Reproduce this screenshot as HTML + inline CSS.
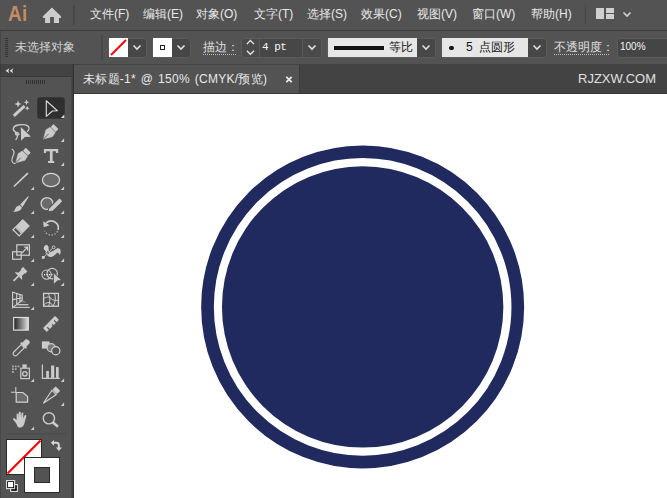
<!DOCTYPE html>
<html><head><meta charset="utf-8">
<style>
*{margin:0;padding:0;box-sizing:border-box}
html,body{width:667px;height:498px;overflow:hidden;background:#535353;font-family:"Liberation Sans",sans-serif;color:#e6e6e6}
.abs{position:absolute}
#menubar{left:0;top:0;width:667px;height:30px;background:#535353}
#menuline{left:0;top:30px;width:667px;height:1px;background:#3c3c3c}
#ctrl{left:0;top:31px;width:667px;height:33px;background:#535353;border-left:1px solid #474747}
#tabbar{left:72px;top:64px;width:595px;height:29px;background:#434343}
#tab{left:74px;top:65px;width:226px;height:28px;background:#535353;border-right:1px solid #3c3c3c}
#canvas{left:74px;top:94px;width:593px;height:404px;background:#fff}
#tabline{left:74px;top:93px;width:593px;height:1px;background:#383838}
#lphdr{left:0;top:64px;width:72px;height:13px;background:#434343;border-bottom:1px solid #3a3a3a;border-left:1px solid #3d3d3d}
#lpanel{left:0;top:77px;width:72px;height:422px;background:#535353;border-left:1px solid #474747;border-right:1px solid #474747}
#gap{left:72px;top:64px;width:2px;height:434px;background:linear-gradient(90deg,#404040 0 1px,#333 1px 2px)}
.menu{top:6px;font-size:12px;color:#e8e8e8;white-space:nowrap;line-height:16px}
.dd{background:#474747;border-radius:3px;border:1px solid #5b5b5b}
.field{background:#454545}
.sw{background:#fff}
.txt{white-space:nowrap}
</style></head><body>
<div id="menubar" class="abs"></div>
<div id="menuline" class="abs"></div>
<div id="ctrl" class="abs"></div>
<div id="tabbar" class="abs"></div>
<div id="tab" class="abs"></div>
<div id="canvas" class="abs"></div>
<div id="tabline" class="abs"></div>
<div id="lphdr" class="abs"></div>
<div id="lpanel" class="abs"></div>
<div id="gap" class="abs"></div>

<!-- menubar content -->
<div class="abs txt" style="left:7.6px;top:1px;font-size:21.7px;font-weight:bold;color:#c58b64;line-height:26px;transform:scaleX(0.87);transform-origin:0 0;letter-spacing:0.3px">Ai</div>
<svg class="abs" style="left:40px;top:5px" width="24" height="20" viewBox="40 5 24 20"><path d="M51.9 7.6 L61 16.3 Q61.6 17.9 60.2 18.1 H59 V23 H53.9 V17.1 H50.1 V23 H45.1 V18.1 H43.7 Q42.3 17.9 42.9 16.3 Z" fill="#cdcdcd"/></svg>
<div class="abs" style="left:73px;top:5px;width:2px;height:20px;background:#474747"></div>
<div class="abs menu" style="left:90px">文件(F)</div>
<div class="abs menu" style="left:143px">编辑(E)</div>
<div class="abs menu" style="left:196px">对象(O)</div>
<div class="abs menu" style="left:254px">文字(T)</div>
<div class="abs menu" style="left:307px">选择(S)</div>
<div class="abs menu" style="left:361px">效果(C)</div>
<div class="abs menu" style="left:417px">视图(V)</div>
<div class="abs menu" style="left:472px">窗口(W)</div>
<div class="abs menu" style="left:531px">帮助(H)</div>
<div class="abs" style="left:585px;top:5px;width:1px;height:20px;background:#474747"></div>
<svg class="abs" style="left:596px;top:8px" width="19" height="11" viewBox="0 0 19 11"><rect x="0" y="0" width="8" height="11" fill="#cfcfcf"/><rect x="10" y="0" width="8" height="5" fill="#cfcfcf"/><rect x="10" y="6" width="8" height="5" fill="#cfcfcf"/></svg>
<svg class="abs" style="left:622px;top:11px" width="10" height="7" viewBox="0 0 10 7"><path d="M1.5 1.5 L5 5 L8.5 1.5" stroke="#cfcfcf" stroke-width="1.6" fill="none"/></svg>

<!-- control bar -->
<div class="abs" style="left:5px;top:38px;width:3px;height:19px;background:repeating-linear-gradient(#353535 0 1px,transparent 1px 2px)"></div>
<div class="abs txt" style="left:15px;top:39px;font-size:12px;color:#d2d2d2;line-height:16px">未选择对象</div>
<div class="abs" style="left:101px;top:35px;width:2px;height:25px;background:#484848"></div>

<div class="abs dd" style="left:108px;top:37.5px;width:38.5px;height:20px"></div>
<div class="abs sw" style="left:109px;top:38px;width:19px;height:19px"></div>
<svg class="abs" style="left:109px;top:38px" width="19" height="19"><line x1="2" y1="17" x2="17" y2="2" stroke="#f00" stroke-width="2"/></svg>
<svg class="abs" style="left:132px;top:44px" width="10" height="7" viewBox="0 0 10 7"><path d="M1.5 1.5 L5 5 L8.5 1.5" stroke="#e0e0e0" stroke-width="1.6" fill="none"/></svg>

<div class="abs dd" style="left:152px;top:37.5px;width:38.5px;height:20px"></div>
<div class="abs sw" style="left:153px;top:38px;width:19px;height:19px"></div>
<div class="abs" style="left:160px;top:45px;width:5px;height:5px;border:1.5px solid #222"></div>
<svg class="abs" style="left:176px;top:44px" width="10" height="7" viewBox="0 0 10 7"><path d="M1.5 1.5 L5 5 L8.5 1.5" stroke="#e0e0e0" stroke-width="1.6" fill="none"/></svg>

<div class="abs txt" style="left:203px;top:40px;font-size:12px;color:#e0e0e0;line-height:15px">描边：</div>
<div class="abs" style="left:203px;top:54px;width:33px;height:1px;background:repeating-linear-gradient(90deg,#bbb 0 1px,transparent 1px 2px)"></div>

<div class="abs dd" style="left:241px;top:37.5px;width:81px;height:20px;background:#4a4a4a"></div>
<div class="abs field" style="left:259px;top:38.5px;width:44px;height:18px;background:#474747;border-left:1px solid #5a5a5a;border-right:1px solid #5a5a5a"></div>
<svg class="abs" style="left:244px;top:38px" width="13" height="18" viewBox="0 0 13 18"><path d="M2.8 6.1 L6.4 2.5 L10 6.1 M2.8 12.7 L6.4 16.3 L10 12.7" stroke="#e6e6e6" stroke-width="1.3" fill="none"/></svg>
<div class="abs txt" style="left:262px;top:40px;font-family:'Liberation Mono',monospace;font-size:11px;letter-spacing:-0.5px;color:#f4f4f4;line-height:14px">4 pt</div>
<svg class="abs" style="left:307px;top:44px" width="10" height="7" viewBox="0 0 10 7"><path d="M1.5 1.5 L5 5 L8.5 1.5" stroke="#e0e0e0" stroke-width="1.6" fill="none"/></svg>

<div class="abs dd" style="left:327px;top:37.5px;width:108.5px;height:20px"></div>
<div class="abs" style="left:328px;top:38px;width:89px;height:19px;background:#e6e6e6"></div>
<div class="abs" style="left:334px;top:46px;width:50px;height:4px;background:#111"></div>
<div class="abs txt" style="left:389px;top:40px;font-size:12px;color:#151515;line-height:15px">等比</div>
<svg class="abs" style="left:421px;top:44px" width="10" height="7" viewBox="0 0 10 7"><path d="M1.5 1.5 L5 5 L8.5 1.5" stroke="#e0e0e0" stroke-width="1.6" fill="none"/></svg>

<div class="abs dd" style="left:441px;top:37.5px;width:105.5px;height:20px"></div>
<div class="abs" style="left:442px;top:38px;width:86px;height:19px;background:#e6e6e6"></div>
<div class="abs" style="left:449px;top:45.5px;width:4.6px;height:4.6px;border-radius:50%;background:#111"></div>
<div class="abs txt" style="left:466px;top:40px;font-size:12px;color:#151515;line-height:15px">5&nbsp;&nbsp;点圆形</div>
<svg class="abs" style="left:532px;top:44px" width="10" height="7" viewBox="0 0 10 7"><path d="M1.5 1.5 L5 5 L8.5 1.5" stroke="#e0e0e0" stroke-width="1.6" fill="none"/></svg>

<div class="abs txt" style="left:554px;top:40px;font-size:12px;color:#e0e0e0;line-height:15px">不透明度：</div>
<div class="abs" style="left:554px;top:54px;width:56px;height:1px;background:repeating-linear-gradient(90deg,#bbb 0 1px,transparent 1px 2px)"></div>
<div class="abs field" style="left:616.5px;top:38px;width:60px;height:19.5px;border-radius:3px;border:1px solid #5a5a5a"></div>
<div class="abs txt" style="left:620px;top:40px;font-size:10px;color:#f4f4f4;line-height:14px">100%</div>

<!-- tab bar -->
<div class="abs txt" style="left:83px;top:72.4px;font-size:12px;color:#e8e8e8;line-height:15px;word-spacing:1.2px;letter-spacing:0.28px">未标题-1* @ 150% (CMYK/预览)</div>
<svg class="abs" style="left:285px;top:75.5px" width="8" height="7" viewBox="0 0 8 7"><path d="M1.3 0.8 L6.7 6.2 M6.7 0.8 L1.3 6.2" stroke="#ececec" stroke-width="1.7"/></svg>
<div class="abs txt" style="left:578px;top:72px;font-size:13px;color:#e0e0e0;line-height:14px">RJZXW.COM</div>

<!-- canvas circle -->
<svg class="abs" style="left:0;top:0" width="667" height="498">
<circle cx="362.65" cy="306.9" r="155.15" fill="none" stroke="#212a5e" stroke-width="12.7"/>
<circle cx="362.65" cy="306.9" r="140.7" fill="#212a5e"/>
</svg>

<!-- left panel -->
<svg class="abs" style="left:0;top:60px" width="20" height="20" viewBox="0 60 20 20"><path d="M9.4 68.3 L5.5 70.8 L9.4 73.2 L8.3 70.8 Z M13.3 68.3 L9.6 70.8 L13.3 73.2 L12.2 70.8 Z" fill="#e2e2e2"/></svg>
<div class="abs" style="left:26px;top:80px;width:19px;height:4px;background:repeating-linear-gradient(90deg,#333 0 1px,transparent 1px 2px)"></div>
<div class="abs" style="left:37px;top:97px;width:28px;height:22px;background:#2f2f2f;border-radius:3px;border:1px solid #383838"></div>


<svg class="abs" style="left:0;top:0" width="74" height="498" viewBox="0 0 74 498">
<g fill="#cbcbcb" stroke="none">
<!-- triangles -->
<path d="M64.3 114.6 L64.3 118 L60.9 118 Z" fill="#dcdcdc"/>
<path d="M64.1 138.6 V142 H60.7 Z M64.1 162.6 V166 H60.7 Z M34.1 186.6 V190 H30.7 Z M64.1 186.6 V190 H60.7 Z M34.1 210.6 V214 H30.7 Z M64.1 210.6 V214 H60.7 Z M34.1 234.6 V238 H30.7 Z M64.1 234.6 V238 H60.7 Z M34.1 258.6 V262 H30.7 Z M64.1 258.6 V262 H60.7 Z M34.1 282.6 V286 H30.7 Z M64.1 282.6 V286 H60.7 Z M34.1 306.6 V310 H30.7 Z M34.1 378.6 V382 H30.7 Z M64.1 378.6 V382 H60.7 Z M64.1 402.6 V406 H60.7 Z M34.1 426.6 V430 H30.7 Z"/>
</g>
<!-- row1: magic wand -->
<g>
<line x1="13.8" y1="115.8" x2="24.5" y2="106" stroke="#cbcbcb" stroke-width="3"/>

<path d="M18 100.6 L19 103.1 L21.5 104.1 L19 105.1 L18 107.6 L17 105.1 L14.5 104.1 L17 103.1 Z" fill="#cbcbcb"/>
<path d="M26.5 99.5 L27.3 101.5 L29.3 102.3 L27.3 103.1 L26.5 105.1 L25.7 103.1 L23.7 102.3 L25.7 101.5 Z" fill="#cbcbcb"/>
<path d="M27.2 106 L27.9 107.6 L29.5 108.3 L27.9 109 L27.2 110.6 L26.5 109 L24.9 108.3 L26.5 107.6 Z" fill="#cbcbcb"/>
</g>
<!-- row1: selection arrow -->
<path d="M46.3 100.8 L57.4 110.8 L52.4 111 L46.3 116.4 Z" fill="none" stroke="#d6d6d6" stroke-width="1.15" stroke-linejoin="round"/>
<!-- row2: lasso -->
<g fill="none" stroke="#cbcbcb" stroke-width="1.3" stroke-linecap="round">
<path d="M15.5 132 C12 130 12.5 126 18 125 C23 124 28.5 124.8 29 128 C29.2 129.5 28.5 130.5 27.5 131.3"/>
<path d="M15.5 132 C16.5 132.5 19 132.5 19 134 C19 135.5 16 135.5 15.5 134 C15 132.5 17.5 133 17.5 135.5 C17.5 137.5 16.5 138.5 16 139.6"/>
</g>
<path d="M20.8 127 L31 136.7 L24.9 137.1 L21.1 140.8 Z" fill="#cbcbcb"/>
<!-- row2: pen -->
<g transform="translate(49.6 132.9) rotate(45)">
<rect x="-3.5" y="-9" width="7" height="4" rx="0.6" fill="#cbcbcb"/>
<path d="M-3.6 -4.3 L3.6 -4.3 L4.7 0.5 L0 8.6 L-4.7 0.5 Z" fill="#cbcbcb" stroke="#cbcbcb" stroke-width="0.6" stroke-linejoin="round"/>
<path d="M0 8.6 L0 1.5" stroke="#535353" stroke-width="0.8"/>
</g>
<!-- row3: curvature -->
<path d="M12.1 149.3 C14 150.5 14.6 152 13.6 154.5 C12.5 157 11.5 159 11.9 161 C12.3 162.8 13.8 163.6 15.2 163.3" fill="none" stroke="#cbcbcb" stroke-width="1.2" stroke-linecap="round"/>
<g transform="translate(21.9 156.6) rotate(45)">
<rect x="-3.5" y="-9" width="7" height="4" rx="0.6" fill="#cbcbcb"/>
<path d="M-3.6 -4.3 L3.6 -4.3 L4.7 0.5 L0 8.6 L-4.7 0.5 Z" fill="#cbcbcb" stroke="#cbcbcb" stroke-width="0.6" stroke-linejoin="round"/>
<path d="M0 8.6 L0 1.5" stroke="#535353" stroke-width="0.8"/>
</g>
<!-- row3: T -->
<path d="M43.9 148.9 H58.2 V153 H55.9 V151.3 H52.6 V160.9 H54.2 V163.1 H48 V160.9 H49.9 V151.3 H46 V153 H43.9 Z" fill="#cbcbcb"/>
<!-- row4: line -->
<line x1="13.9" y1="186.5" x2="27.9" y2="173.1" stroke="#cbcbcb" stroke-width="1.7"/>
<!-- row4: ellipse -->
<ellipse cx="51" cy="180" rx="8.6" ry="6.6" fill="#6b6b6b" stroke="#d6d6d6" stroke-width="1.2"/>
<!-- row5: paintbrush -->
<path d="M28.6 197 C29 196.4 28.2 196 27.8 196.5 L20.2 204.6 L22.6 207 Z" fill="#cbcbcb"/>
<path d="M19.6 205.2 L22 207.6 C21 211 17 212 13 211.8 C15.5 210.5 15 206 19.6 205.2 Z" fill="#cbcbcb"/>
<!-- row5: shaper -->
<circle cx="47" cy="203.5" r="5.9" fill="#6b6b6b" stroke="#d0d0d0" stroke-width="1.3"/>
<g transform="translate(54.8 205.8) rotate(45)">
<path d="M-2.5 -8.5 Q0 -10 2.5 -8.5 L2.5 5 L-0.5 9.3 L-2.5 6 Z" fill="#cbcbcb" stroke="#535353" stroke-width="1"/>
</g>
<!-- row6: eraser -->
<g transform="translate(21.2 227.6) rotate(45)">
<rect x="-5" y="-7.3" width="10" height="10.3" fill="#cbcbcb"/>
<rect x="-4.35" y="3.65" width="8.7" height="3.6" fill="none" stroke="#cbcbcb" stroke-width="1.3"/>
</g>
<!-- row6: rotate -->
<path d="M46.2 222.9 A7.2 7.2 0 0 1 58.1 230" fill="none" stroke="#cbcbcb" stroke-width="1.7"/>
<path d="M43.2 221.3 L49.6 225.3 L43.7 227.2 Z" fill="#cbcbcb"/>
<path d="M58.1 230 A7.2 7.2 0 0 1 44.7 230.9" fill="none" stroke="#cbcbcb" stroke-width="1.3" stroke-dasharray="1.1 1.9" stroke-dashoffset="-1.5"/>
<!-- row7: scale -->
<g fill="none" stroke="#d0d0d0" stroke-width="1.2">
<rect x="16.8" y="244.8" width="12.6" height="10.4"/>
<rect x="12.6" y="251.8" width="8.6" height="7.4"/>
<path d="M22 253 L27.4 247.4 M24.2 247.2 H27.6 V250.6"/>
</g>
<!-- row7: puppet warp -->
<path d="M43.8 249.4 C43.4 246.6 44.8 245 46.4 245.1 C48.3 245.3 48.9 247.3 48.6 249.3 C48.8 251 50 251.9 51.5 251.6 C53.5 251.2 55 249.5 57 248.6 C59 247.8 60.8 249.2 60.7 251.6 C60.7 253.2 60.3 254.4 59.6 255.3 C59.3 253.4 58.4 252.2 57 252.8 C55.4 254.6 53.4 256.9 50.6 256.9 C47.8 256.9 46 254.6 46 252.4 C46 250.8 45 250.2 43.8 249.4 Z" fill="#cbcbcb"/>
<path d="M43.4 257.4 L53.6 247.2" stroke="#535353" stroke-width="2.4"/>
<path d="M43.4 257.4 L53.6 247.2" stroke="#cbcbcb" stroke-width="0.9"/>
<circle cx="47.9" cy="252.6" r="1.9" fill="#535353" stroke="#cbcbcb" stroke-width="1"/>
<path d="M46.8 253.7 L49 251.5" stroke="#cbcbcb" stroke-width="0.8"/>
<rect x="41.9" y="256" width="2.8" height="2.8" fill="#cbcbcb"/>
<circle cx="53.6" cy="247.3" r="1.4" fill="#535353" stroke="#cbcbcb" stroke-width="1"/>
<!-- row8: pin -->
<g transform="translate(19.4 275.1) rotate(45) scale(0.92)">
<rect x="-3.4" y="-9" width="6.8" height="3.6" rx="0.5" fill="#cbcbcb"/>
<rect x="-2.6" y="-5.6" width="5.2" height="4.4" fill="#cbcbcb"/>
<path d="M-2.6 -1.4 L2.6 -1.4 L5.8 1.6 L-5.8 1.6 Z" fill="#cbcbcb"/>
<line x1="0" y1="1.5" x2="0" y2="9" stroke="#cbcbcb" stroke-width="1.8"/>
</g>
<!-- row8: shape builder -->
<g fill="none" stroke="#cbcbcb" stroke-width="1.15">
<circle cx="52.2" cy="273.6" r="5.2"/>
<circle cx="46.6" cy="274.6" r="4.6"/>
</g>
<path d="M44 274.6 h1.2 M46.4 274.6 h1.2 M48.8 274.6 h1.2 M51.2 274.6 h1.2" stroke="#eeeeee" stroke-width="1.3"/>
<path d="M53.4 272.8 L61.8 280.4 L57.6 280.7 L53.6 284.4 Z" fill="#cbcbcb" stroke="#535353" stroke-width="0.8"/>
<!-- row9: perspective grid -->
<path d="M21 299.3 L26.9 302.6 H18 Z" fill="#7a7a7a"/>
<path d="M16 304.6 H28.3 L29.8 307.4 H13 Z" fill="#666"/>
<g fill="none" stroke="#d0d0d0" stroke-width="1.1">
<path d="M12.6 292.2 V307.6 L22.2 300.3 V295.2 Z M16.7 293.9 V304.5 M19.9 295.2 V302 M12.6 299.6 L22.2 297.8"/>
<path d="M17.5 304.6 H28.3 M12.6 307.5 H29.8" stroke="#c4c4c4"/>
</g>
<!-- row9: mesh -->
<g fill="none" stroke="#d0d0d0">
<rect x="43.6" y="293.4" width="14.8" height="12.8" stroke-width="1.3"/>
<path d="M48 293.5 C50 296 50.5 301 48.6 306.2 M54.5 293.5 C56 297 55.5 302 53.2 306.2 M43.6 298.8 C46.5 296.5 49 296.5 51 298.5 C53 300.5 55.5 300.5 58.4 300.2 M43.6 305 C46 302.5 49 302 50.5 303 C51.5 304 52.5 305 53.2 306.2" stroke-width="1"/>
</g>
<!-- row10: gradient -->
<defs><linearGradient id="gr" x1="0" x2="1" y1="0" y2="0"><stop offset="0" stop-color="#1e1e1e"/><stop offset="1" stop-color="#dedede"/></linearGradient></defs>
<rect x="13.7" y="317.5" width="14.6" height="12.6" fill="url(#gr)" stroke="#dedede" stroke-width="1.2"/>
<!-- row10: ruler -->
<g transform="translate(50.95 323.95) rotate(-45)">
<rect x="-8.6" y="-2.75" width="17.2" height="5.5" rx="0.6" fill="#cbcbcb"/>
<path d="M-5 3.6 V-0.3 M0.3 3.6 V1.1 M4.8 3.6 V-0.3" stroke="#535353" stroke-width="1.2"/>
</g>
<!-- row11: eyedropper -->
<g transform="translate(20 349) rotate(45)">
<path d="M-2.8 -10.5 C-2.8 -13 2.8 -13 2.8 -10.5 L2.8 -6 L4 -6 L4 -4.2 L-4 -4.2 L-4 -6 L-2.8 -6 Z" fill="#cbcbcb"/>
<path d="M-2.2 -4 L2.2 -4 L2.2 6.5 C2.2 9.5 -2.2 9.5 -2.2 6.5 Z" fill="none" stroke="#cbcbcb" stroke-width="1.2"/>
</g>
<!-- row11: blend -->
<rect x="41.9" y="341.4" width="7.6" height="7.2" fill="#cbcbcb"/>
<circle cx="51.2" cy="347.8" r="4.1" fill="#777" stroke="#cbcbcb" stroke-width="1.2"/>
<circle cx="55.8" cy="350.8" r="4.1" fill="#535353" stroke="#d6d6d6" stroke-width="1.2"/>
<!-- row12: symbol sprayer -->
<g fill="#aaa">
<rect x="12" y="365.5" width="1.8" height="1.8"/><rect x="14.8" y="365.5" width="1.8" height="1.8"/><rect x="17.6" y="365.5" width="1.8" height="1.8"/>
<rect x="12" y="368.3" width="1.8" height="1.8"/><rect x="14.8" y="368.3" width="1.8" height="1.8"/>
<rect x="12" y="371.1" width="1.8" height="1.8"/>
</g>
<rect x="22.4" y="364.4" width="4.3" height="3.4" fill="#cbcbcb"/>
<rect x="20.8" y="368.2" width="8.6" height="10.4" fill="none" stroke="#cbcbcb" stroke-width="1.2"/>
<circle cx="24.9" cy="373.8" r="2.2" fill="none" stroke="#cbcbcb" stroke-width="1.3"/>
<!-- row12: column graph -->
<path d="M42.4 364.4 V378.4 H59.8" fill="none" stroke="#cbcbcb" stroke-width="1.2"/>
<rect x="46.2" y="370.9" width="2.7" height="7" fill="#cbcbcb"/>
<rect x="51.1" y="365.5" width="3.1" height="12.4" fill="#cbcbcb"/>
<rect x="56" y="367.1" width="2.7" height="10.8" fill="#cbcbcb"/>
<!-- row13: artboard -->
<path d="M11 392.3 H15.8 V386.9" fill="none" stroke="#cbcbcb" stroke-width="1.1"/>
<path d="M16.2 392.5 H22.9 L27.6 396.6 V402.2 H16.2 Z" fill="#6b6b6b" stroke="#d0d0d0" stroke-width="1.2"/>
<!-- row13: slice/knife -->
<g transform="translate(50.5 396) rotate(45)">
<rect x="-3.2" y="-10.5" width="6.4" height="4.6" rx="0.8" fill="#cbcbcb"/>
<path d="M-3 -5 L3 -5 L0 10.2 Z" fill="none" stroke="#cbcbcb" stroke-width="1.2" stroke-linejoin="miter"/>
</g>
<!-- row14: hand -->
<path d="M16 423 C14.5 421 12.5 419.5 13 418.5 C13.6 417.6 15.5 418.8 16.6 420 L16.6 414.5 C16.6 413.3 18.4 413.3 18.4 414.5 L18.6 418 L18.8 412.6 C18.8 411.4 20.8 411.4 20.8 412.6 L21 418 L21.5 413.4 C21.6 412.3 23.4 412.3 23.3 413.6 L23.2 418.5 L24.6 415.6 C25 414.6 26.6 415 26.3 416.2 C25.5 419 25 422 24 424.5 C23 427 21.5 427.6 19.5 427.6 C17.5 427.6 17 425 16 423 Z" fill="#cbcbcb"/>
<!-- row14: zoom -->
<circle cx="48.9" cy="418.3" r="5.6" fill="none" stroke="#cbcbcb" stroke-width="1.4"/>
<line x1="52.8" y1="422.3" x2="58" y2="426.8" stroke="#cbcbcb" stroke-width="2.6"/>
<!-- separator -->
<line x1="6" y1="434" x2="66" y2="434" stroke="#4a4a4a" stroke-width="1"/>
</svg>
<!-- fill/stroke -->
<div class="abs" style="left:6px;top:439px;width:36px;height:36px;background:#fff;border:1px solid #2a2a2a"></div>
<svg class="abs" style="left:6px;top:439px" width="36" height="36"><line x1="1.5" y1="34.5" x2="34.5" y2="1.5" stroke="#f00" stroke-width="2.2"/></svg>
<div class="abs" style="left:24px;top:457px;width:36px;height:36px;background:#fff;border:1px solid #2a2a2a"></div>
<div class="abs" style="left:34px;top:467px;width:16px;height:16px;background:#535353;border:1px solid #2a2a2a"></div>
<svg class="abs" style="left:0;top:430px" width="74" height="68" viewBox="0 430 74 68">
<path d="M53.6 442.8 H56.5 Q58.8 442.8 58.8 445.2 V448" fill="none" stroke="#d4d4d4" stroke-width="2"/>
<path d="M50.8 442.8 L54 439.9 L54 445.8 Z" fill="#d4d4d4"/>
<path d="M58.9 451 L55.9 447.6 L62 447.6 Z" fill="#d4d4d4"/>
<rect x="10.6" y="484.6" width="6.8" height="6.8" fill="#000" stroke="#d8d8d8" stroke-width="1.2"/>
<rect x="6.6" y="480.6" width="8" height="8" fill="#000" stroke="#d8d8d8" stroke-width="1.2"/>
<rect x="8" y="482" width="5.2" height="5.2" fill="#fff"/>
<path d="M14.6 486.5 V488.6 H12.5" fill="none" stroke="#bbb" stroke-width="0.8"/>
</svg>
</body></html>
